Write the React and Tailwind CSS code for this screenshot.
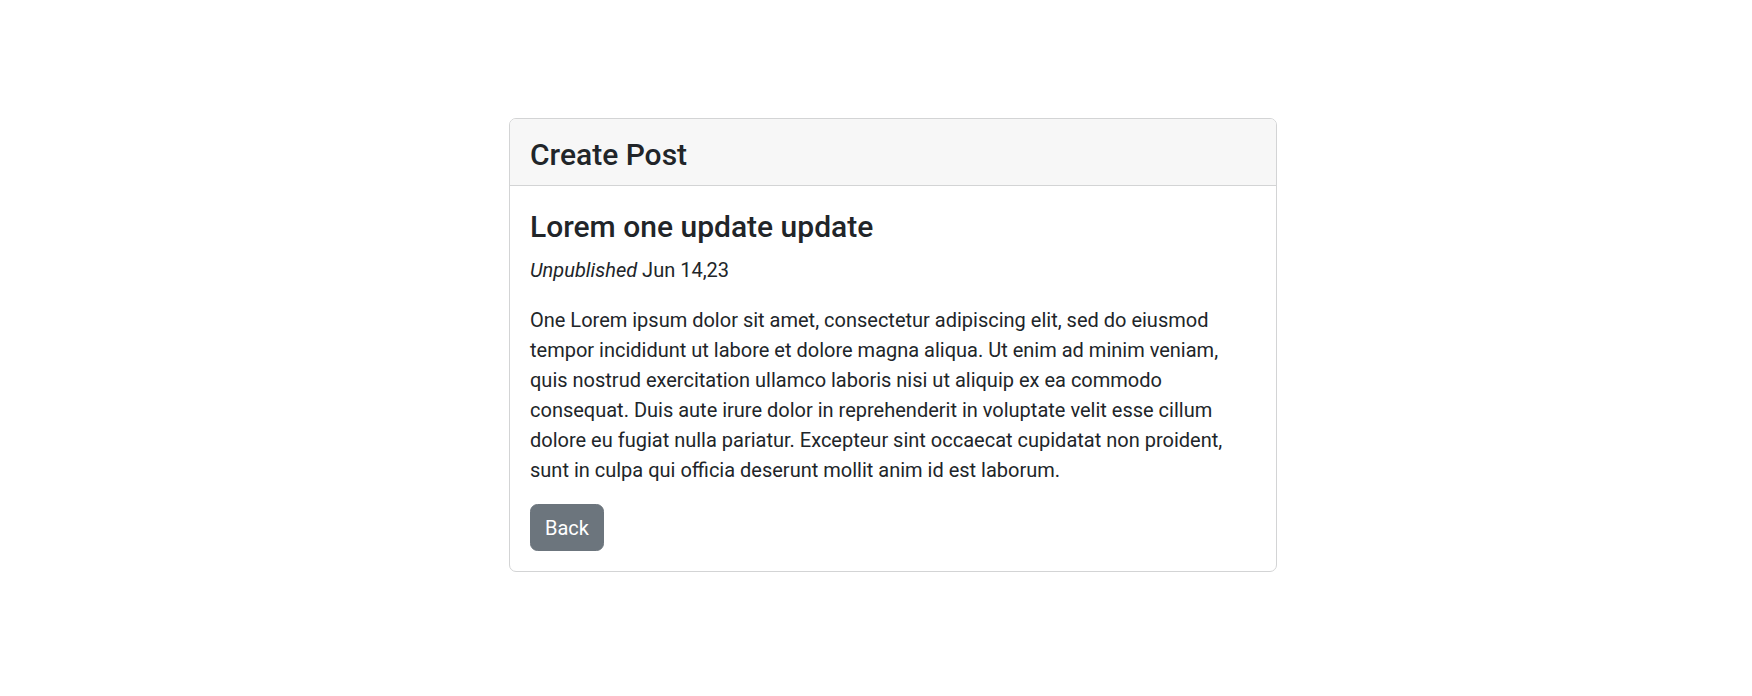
import React from 'react';

const body =
  'One Lorem ipsum dolor sit amet, consectetur adipiscing elit, sed do eiusmod tempor incididunt ut labore et dolore magna aliqua. Ut enim ad minim veniam, quis nostrud exercitation ullamco laboris nisi ut aliquip ex ea commodo consequat. Duis aute irure dolor in reprehenderit in voluptate velit esse cillum dolore eu fugiat nulla pariatur. Excepteur sint occaecat cupidatat non proident, sunt in culpa qui officia deserunt mollit anim id est laborum.';

export default function App() {
  return (
    <div className="min-h-screen bg-white font-['Roboto',sans-serif] text-[#212529] pt-[118px]">
      <div className="ml-[509px] w-[768px]">
        {/* Card */}
        <div className="border border-[#d3d4d5] rounded-[7px] overflow-hidden">
          {/* Header */}
          <div className="bg-[#f7f7f7] border-b border-[#d3d4d5] px-5 pt-[18px] pb-[12px]">
            <h4 className="text-[30px] leading-[36px] font-medium">Create Post</h4>
          </div>

          {/* Body */}
          <div className="px-5 pt-[23px] pb-5">
            <h4 className="text-[30px] leading-[36px] font-medium mb-[10px]">Lorem one update update</h4>
            <p className="text-[20px] leading-[30px] mb-5">
              <em>Unpublished</em> Jun 14,23
            </p>
            <p className="text-[20px] leading-[30px] mb-[19px]">{body}</p>
            <button
              type="button"
              className="bg-[#6c757d] border border-[#6c757d] text-white text-[20px] leading-[30px] px-[14px] py-[7.5px] rounded-[7.5px] hover:bg-[#5c636a]"
            >
              Back
            </button>
          </div>
        </div>
      </div>
    </div>
  );
}
